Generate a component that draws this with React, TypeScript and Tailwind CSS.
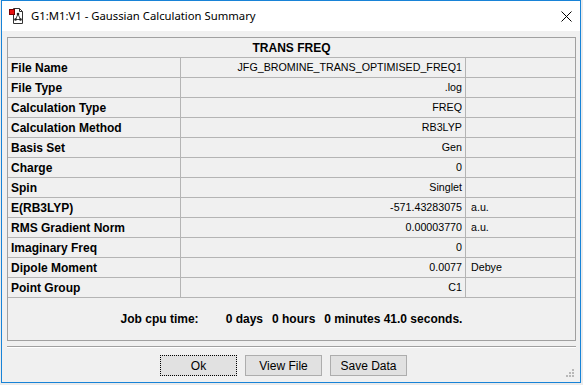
import React from "react";

const rows: [string, string, string][] = [
  ["File Name", "JFG_BROMINE_TRANS_OPTIMISED_FREQ1", ""],
  ["File Type", ".log", ""],
  ["Calculation Type", "FREQ", ""],
  ["Calculation Method", "RB3LYP", ""],
  ["Basis Set", "Gen", ""],
  ["Charge", "0", ""],
  ["Spin", "Singlet", ""],
  ["E(RB3LYP)", "-571.43283075", "a.u."],
  ["RMS Gradient Norm", "0.00003770", "a.u."],
  ["Imaginary Freq", "0", ""],
  ["Dipole Moment", "0.0077", "Debye"],
  ["Point Group", "C1", ""],
];

function AppIcon() {
  return (
    <svg width="16" height="16" viewBox="0 0 16 16" className="shrink-0">
      <path d="M5.5 0.5 H11.5 L14.5 3.5 V15.5 H5.5 Z" fill="#fff" stroke="#333" strokeWidth="1" />
      <path d="M11.5 0.5 V3.5 H14.5" fill="none" stroke="#333" strokeWidth="1" />
      <line x1="10" y1="6" x2="7.5" y2="11.5" stroke="#444" strokeWidth="1" />
      <line x1="10" y1="6" x2="12.5" y2="11.5" stroke="#444" strokeWidth="1" />
      <line x1="7.5" y1="11.5" x2="12.5" y2="11.5" stroke="#444" strokeWidth="1" />
      <circle cx="10" cy="6" r="1.3" fill="#222" />
      <circle cx="7.5" cy="11.5" r="1.3" fill="#222" />
      <circle cx="12.5" cy="11.5" r="1.3" fill="#222" />
      <rect x="1.5" y="1.5" width="5" height="5" fill="#e81010" stroke="#7a0000" strokeWidth="1" />
    </svg>
  );
}

function CloseIcon() {
  return (
    <svg width="11" height="11" viewBox="0 0 11 11" className="shrink-0">
      <line x1="0.5" y1="0.5" x2="10.5" y2="10.5" stroke="#000" strokeWidth="1" />
      <line x1="10.5" y1="0.5" x2="0.5" y2="10.5" stroke="#000" strokeWidth="1" />
    </svg>
  );
}

function Grip() {
  const dots = [
    [7, 1],
    [4, 4],
    [7, 4],
    [1, 7],
    [4, 7],
    [7, 7],
  ];
  return (
    <svg width="9" height="9" viewBox="0 0 9 9">
      {dots.map(([x, y], i) => (
        <rect key={i} x={x} y={y} width="2" height="2" fill="#b8b8b8" />
      ))}
    </svg>
  );
}

export default function App() {
  const sans = { fontFamily: '"Liberation Sans", Arial, sans-serif' };
  return (
    <div className="w-[583px] h-[385px] bg-[#ebebeb] overflow-hidden" style={sans}>
      <div className="relative ml-[1px] w-[580px] h-[383px] border border-[#1883d7] bg-[#f0f0f0] flex flex-col">
        {/* Title bar */}
        <div className="h-[30px] bg-white flex items-center shrink-0">
          <div className="ml-[6px]">
            <AppIcon />
          </div>
          <span
            className="ml-[7px] text-[11.3px] text-black leading-none"
            style={{ fontFamily: '"Noto Sans", "Open Sans", sans-serif' }}
          >
            G1:M1:V1 - Gaussian Calculation Summary
          </span>
          <div className="ml-auto mr-[8px]">
            <CloseIcon />
          </div>
        </div>

        {/* Table panel */}
        <div className="ml-[5px] mt-[6px] w-[569px] border border-[#a0a0a0] flex flex-col shrink-0">
          <div className="h-[20px] border-b border-[#b4b4b4] flex items-center justify-center">
            <span className="text-[12px] font-bold text-black">TRANS FREQ</span>
          </div>
          {rows.map(([label, value, unit]) => (
            <div key={label} className="h-[20px] border-b border-[#b4b4b4] flex">
              <div className="w-[173px] border-r border-[#b4b4b4] flex items-center pl-[3px]">
                <span className="text-[12px] font-bold text-black whitespace-nowrap">{label}</span>
              </div>
              <div className="w-[285px] border-r border-[#b4b4b4] flex items-center justify-end pr-[3px]">
                <span className="text-[10.7px] text-black whitespace-nowrap">{value}</span>
              </div>
              <div className="flex-1 flex items-center pl-[5px]">
                <span className="text-[10.7px] text-black whitespace-nowrap">{unit}</span>
              </div>
            </div>
          ))}
          <div className="h-[42px] flex items-center justify-center">
            <span className="text-[12px] font-bold text-black whitespace-nowrap">Job cpu time:</span>
            <span className="ml-[27px] text-[12px] font-bold text-black whitespace-nowrap">0 days</span>
            <span className="ml-[9px] text-[12px] font-bold text-black whitespace-nowrap">0 hours</span>
            <span className="ml-[9px] text-[12px] font-bold text-black whitespace-nowrap">
              0 minutes 41.0 seconds.
            </span>
          </div>
        </div>

        {/* Separator */}
        <div className="ml-[5px] mt-[5px] w-[569px] h-[2px] border-t border-[#a0a0a0] border-b border-b-white shrink-0" />

        {/* Buttons */}
        <div className="mt-[7px] ml-[158px] flex gap-[8px] shrink-0">
          <button className="w-[77px] h-[21px] bg-[#e1e1e1] border border-dotted border-black text-[12px] text-black flex items-center justify-center">
            Ok
          </button>
          <button className="w-[77px] h-[21px] bg-[#e1e1e1] border border-[#adadad] text-[12px] text-black flex items-center justify-center">
            View File
          </button>
          <button className="w-[77px] h-[21px] bg-[#e1e1e1] border border-[#adadad] text-[12px] text-black flex items-center justify-center">
            Save Data
          </button>
        </div>

        <div className="absolute right-[6px] bottom-[5px]">
          <Grip />
        </div>
      </div>
    </div>
  );
}
